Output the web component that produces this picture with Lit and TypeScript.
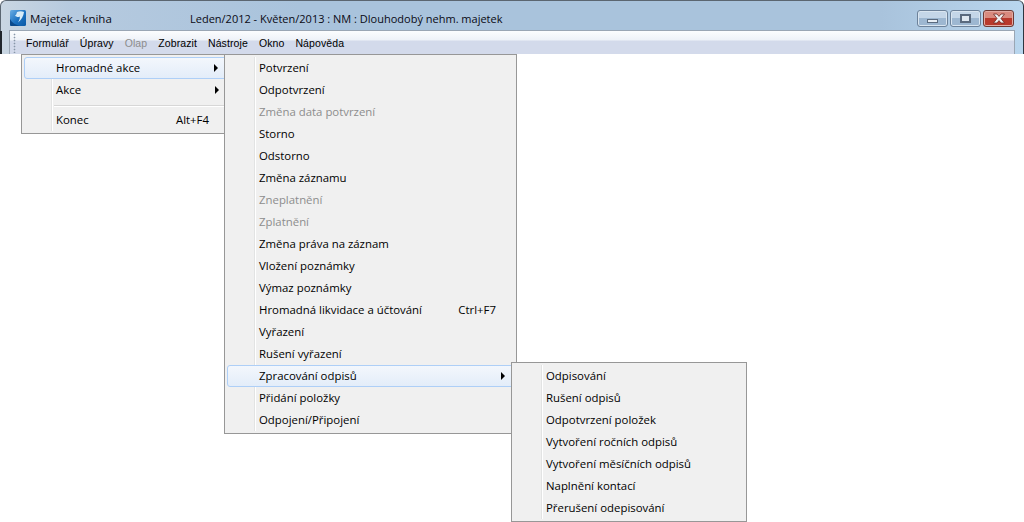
import { LitElement, html, css } from "lit";
import { customElement } from "lit/decorators.js";

type Item = { t: string; dis?: boolean; hot?: boolean; sub?: boolean; key?: string; sep?: boolean };
const m1: Item[] = [
  { t: "Hromadné akce", hot: true, sub: true },
  { t: "Akce", sub: true },
  { t: "", sep: true },
  { t: "Konec", key: "Alt+F4" },
];
const m2: Item[] = [
  { t: "Potvrzení" }, { t: "Odpotvrzení" }, { t: "Změna data potvrzení", dis: true }, { t: "Storno" },
  { t: "Odstorno" }, { t: "Změna záznamu" }, { t: "Zneplatnění", dis: true }, { t: "Zplatnění", dis: true },
  { t: "Změna práva na záznam" }, { t: "Vložení poznámky" }, { t: "Výmaz poznámky" },
  { t: "Hromadná likvidace a účtování", key: "Ctrl+F7" }, { t: "Vyřazení" }, { t: "Rušení vyřazení" },
  { t: "Zpracování odpisů", hot: true, sub: true }, { t: "Přidání položky" }, { t: "Odpojení/Připojení" },
];
const m3: Item[] = [
  { t: "Odpisování" }, { t: "Rušení odpisů" }, { t: "Odpotvrzení položek" }, { t: "Vytvoření ročních odpisů" },
  { t: "Vytvoření měsíčních odpisů" }, { t: "Naplnění kontací" }, { t: "Přerušení odepisování" },
];

@customElement("app-root")
export class AppRoot extends LitElement {
  static styles = css`
    :host { display: block; position: relative; width: 1024px; height: 522px; overflow: hidden; background: #fff;
      font-family: "Open Sans", Tahoma, sans-serif; font-size: 11.4px; color: #000; }
    .frame { position: relative; height: 54px; box-sizing: border-box; border-radius: 6px 6px 0 0; border: 1px solid #5b6671; border-right-color: #2c3640; border-bottom: 0;
      background: linear-gradient(90deg, #c9d6e2 0, #b6cadf 70px, #a9c3dc 300px, #a9c3dc 880px, #b9d6ee 100%);
      padding: 0 8px 0 8px; display: flex; flex-direction: column; }
    .frame::before { content: ""; position: absolute; left: -1px; top: 30px; bottom: 0; width: 2px; background: #20262c; }
    .title { height: 29px; box-sizing: border-box; padding-top: 5px; flex: none; display: flex; align-items: center; font-size: 11px; color: #0a0a14; }
    .logo { width: 16px; height: 16px; margin: 0 4px 0 1px; flex: none; }
    .name { width: 160px; font-size: 11.5px; }
    .ctl { margin-left: auto; display: flex; gap: 2px; align-self: flex-start; margin-top: 4px; margin-right: 1px; }
    .btn { width: 31px; height: 17px; box-sizing: border-box; border: 1px solid #6d829a; border-radius: 3px;
      background: linear-gradient(#c4d6e8 0 50%, #9db7d1 50% 100%); display: flex; align-items: center; justify-content: center;
      box-shadow: inset 0 0 0 1px #d9e5f0; }
    .btn.close { background: linear-gradient(#d98a7e 0 50%, #b8392c 50% 100%); border-color: #6e3a34; box-shadow: inset 0 0 0 1px #e2aaa2; }
    .min { width: 11px; height: 4px; box-sizing: border-box; border: 1px solid #5a6a7e; background: #e8eef4; margin-top: 4px; }
    .max { width: 11px; height: 9px; box-sizing: border-box; border: 2px solid #5a6a7e; background: #dfe8f1; }
    .bar { flex: 1; display: flex; align-items: center; gap: 11px; border: 1px solid #9aa6b4; border-bottom: 0;
      background: linear-gradient(#fcfdfe 0, #eef2f8 9px, #d3daeb 10px, #d3daeb 100%); padding: 1px 0 0 3px; box-sizing: border-box;
      font-family: "Liberation Sans", Tahoma, sans-serif; font-size: 10.5px; letter-spacing: 0.1px; }
    .grip { width: 3px; height: 20px; margin-right: -1px; background-image: radial-gradient(#8796a8 40%, transparent 50%); background-size: 3px 3px; }
    .bar span.dis { color: #8d8d8d; }
    .menu { position: absolute; box-sizing: border-box; background: #f0f0f0; border: 1px solid #979797; padding: 2px; }
    .menu::before { content: ""; position: absolute; top: 2px; bottom: 2px; left: 29px; width: 1px; background: #e2e3e3; border-right: 1px solid #fff; }
    .m1 { left: 21px; top: 54px; width: 210px; height: 80px; }
    .m2 { left: 224px; top: 54px; width: 293px; height: 380px; }
    .m3 { left: 511px; top: 362px; width: 236px; height: 160px; }
    .item { position: relative; height: 22px; display: flex; align-items: center; padding: 0 0 2px 32px; box-sizing: border-box; }
    .item.dis { color: #8d8d8d; }
    .item.hot { border: 1px solid #aecff7; border-radius: 3px; padding: 0 0 2px 31px;
      background: linear-gradient(#f3f7fc, #e3edf9); }
    .key { position: absolute; right: 18px; }
    .m1 .key { right: 19px; }
    .arrow { position: absolute; right: 8px; top: 7px; width: 0; height: 0; border-left: 4px solid #000; border-top: 4px solid transparent; border-bottom: 4px solid transparent; }
    .hot .arrow { top: 6px; right: 8px; }
    .m1 .arrow { right: 9px; }
    .sep { height: 8px; position: relative; }
    .sep::after { content: ""; position: absolute; left: 30px; right: 2px; top: 4px; height: 1px; background: #d7d7d7; border-bottom: 1px solid #fff; }
  `;

  private menu(cls: string, items: Item[]) {
    return html`<div class="menu ${cls}">
      ${items.map((i) =>
        i.sep
          ? html`<div class="sep"></div>`
          : html`<div class="item ${i.dis ? "dis" : ""} ${i.hot ? "hot" : ""}">
              ${i.t}${i.key ? html`<span class="key">${i.key}</span>` : ""}${i.sub ? html`<i class="arrow"></i>` : ""}
            </div>`
      )}
    </div>`;
  }

  render() {
    return html`
      <div class="frame">
        <div class="title">
          <svg class="logo" viewBox="0 0 16 16">
            <defs><linearGradient id="g" x1="0" y1="0" x2="1" y2="1"><stop offset="0" stop-color="#6aaee4"/><stop offset=".55" stop-color="#1a70c0"/><stop offset="1" stop-color="#0b5aa6"/></linearGradient></defs>
            <rect x="0" y="0" width="16" height="16" rx="1.5" fill="url(#g)" />
            <path d="M0 9c2 4 6 6 10 7H1.500A1.500 1.500 0 0 1 0 14.500z" fill="#0b4a8c" />
            <path d="M7 2c2.500-1 5-1 7 0-.5 4-2.500 8-6 10.500C9.500 10 10 8.500 9.800 6.500 8 7.500 6.500 7 5 5.500c1.200-.5 1.700-2 2-3.500z" fill="#d8ecf8" />
          </svg>
          <span class="name">Majetek - kniha</span>
          <span>Leden/2012 - Květen/2013 : NM : Dlouhodobý nehm. majetek</span>
          <div class="ctl">
            <div class="btn"><div class="min"></div></div>
            <div class="btn"><div class="max"></div></div>
            <div class="btn close">
              <svg width="16" height="11" viewBox="0 0 16 11"><path d="M2.500 1h3.500l2 2.400L10 1h3.500l-3.500 4.500L13.500 10H10L8 7.600 6 10H2.500L6 5.500z" fill="#eef0f2" stroke="#6e2a22" stroke-width=".8"/></svg>
            </div>
          </div>
        </div>
        <div class="bar">
          <div class="grip"></div>
          <span>Formulář</span><span>Úpravy</span><span class="dis">Olap</span><span>Zobrazit</span><span>Nástroje</span><span>Okno</span><span>Nápověda</span>
        </div>
      </div>
      ${this.menu("m1", m1)}${this.menu("m2", m2)}${this.menu("m3", m3)}
    `;
  }
}
